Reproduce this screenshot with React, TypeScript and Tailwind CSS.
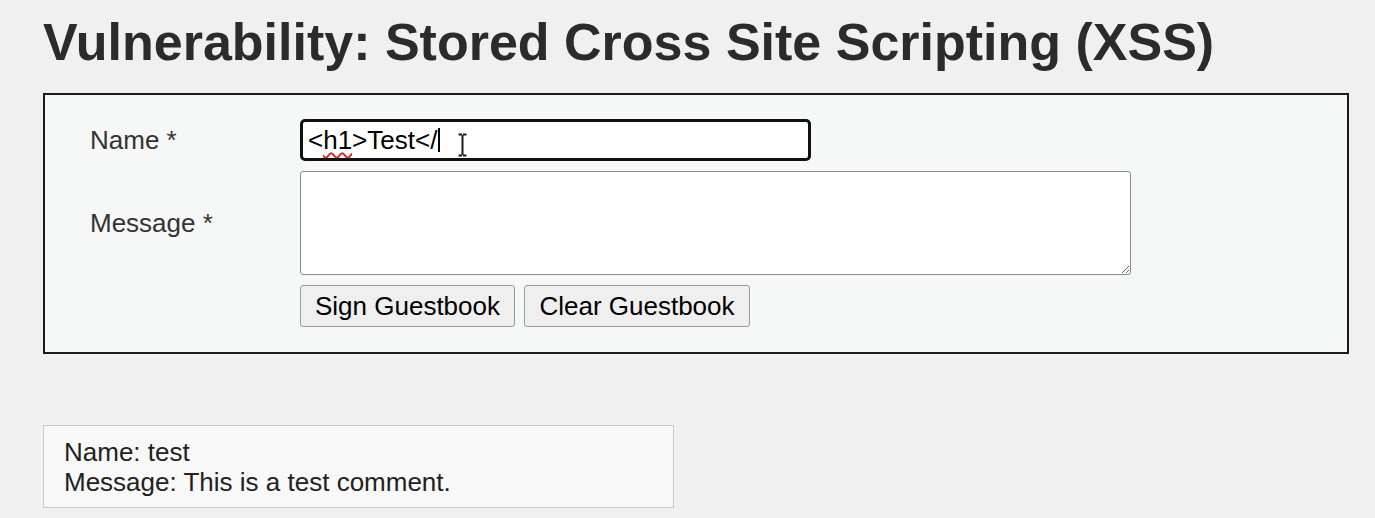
/**
 * DVWA stored XSS page
 */

function IBeam() {
  return (
    <svg
      className="pointer-events-none absolute left-[154px] top-[11px]"
      fill="none"
      height="24"
      stroke="#1a1a1a"
      strokeWidth="2"
      viewBox="0 0 11 24"
      width="11"
    >
      <path d="M1.5 1.5h3.5M6 1.5h3.5M5.5 2v20M1.5 22.5h3.5M6 22.5h3.5" />
    </svg>
  );
}

export default function App() {
  return (
    <div className="min-h-screen w-full bg-[#f0f0f0] pl-[43px] pt-[16px] font-['Liberation_Sans',Arial,sans-serif]">
      <h1 className="font-bold text-[#2b2b2b] text-[52px] leading-none">
        Vulnerability: Stored Cross Site Scripting (XSS)
      </h1>

      <div className="mt-[25px] w-[1306px] border-2 border-[#1c1c1c] bg-[#f6f7f7] pt-[24px] pb-[25px] pl-[45px]">
        <div className="grid grid-cols-[210px_1fr] items-center gap-y-[10px] text-[26px]">
          <label className="text-[#333]">Name *</label>
          <div className="relative flex h-[42px] w-[511px] items-center rounded-[5px] border-[3px] border-[#111] bg-white pl-[5px] text-black">
            <span>&lt;</span>
            <span className="underline decoration-[#d22] decoration-wavy decoration-[1.5px] underline-offset-[3px]">
              h1
            </span>
            <span>&gt;Test&lt;/</span>
            <span className="ml-px inline-block h-[24px] w-[1.5px] bg-black" />
            <IBeam />
          </div>

          <label className="text-[#333]">Message *</label>
          <textarea
            className="h-[104px] w-[831px] rounded-[3px] border-[1.5px] border-[#8a8a8a] bg-white"
            readOnly
          />

          <div />
          <div className="flex gap-[9px]">
            <button
              className="h-[42px] w-[215px] rounded-[3px] border border-[#9a9a9a] bg-[#efefef] text-black"
              type="button"
            >
              Sign Guestbook
            </button>
            <button
              className="h-[42px] w-[226px] rounded-[3px] border border-[#9a9a9a] bg-[#efefef] text-black"
              type="button"
            >
              Clear Guestbook
            </button>
          </div>
        </div>
      </div>

      <div className="mt-[71px] w-[631px] border border-[#c8c8c8] bg-[#f8f8f8] pt-[11px] pb-[10px] pl-[20px] text-[#222] text-[26px] leading-[30px]">
        <div>Name: test</div>
        <div>Message: This is a test comment.</div>
      </div>
    </div>
  );
}
